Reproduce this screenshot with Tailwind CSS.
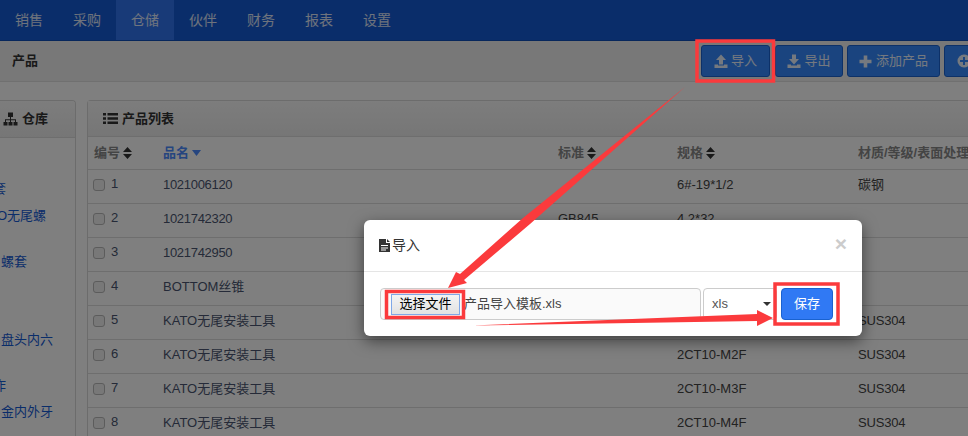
<!DOCTYPE html>
<html lang="zh-CN">
<head>
<meta charset="utf-8">
<title>产品导入</title>
<script src="https://cdn.jsdelivr.net/npm/@tailwindcss/browser@4"></script>
</head>
<body class="m-0 bg-white">
<div class="relative w-[968px] h-[436px] overflow-hidden bg-white text-[13px] text-[#444] font-['Liberation_Sans','Noto_Sans_CJK_SC',sans-serif]">
  <!-- Page -->
  <nav class="flex h-[41px] border-b border-[#0f4fb8] bg-[#145ad4] text-[14px] text-white/85">
    <a class="flex w-[58px] items-center justify-center">销售</a>
    <a class="flex w-[58px] items-center justify-center">采购</a>
    <a class="flex w-[58px] items-center justify-center bg-[#3074f0]">仓储</a>
    <a class="flex w-[58px] items-center justify-center">伙伴</a>
    <a class="flex w-[58px] items-center justify-center">财务</a>
    <a class="flex w-[58px] items-center justify-center">报表</a>
    <a class="flex w-[58px] items-center justify-center">设置</a>
  </nav>
  <div class="flex h-[41px] items-start border-b border-[#e0e0e0] bg-[#f1f1f1]">
    <div class="w-[701px] shrink-0 pl-[12px] pt-[10px] font-bold text-[#333]">产品</div>
    <div class="mt-[4px] flex shrink-0 gap-[4px] text-white/90">
      <button class="mr-[1px] flex h-[32px] w-[69px] items-center justify-center gap-[3px] rounded-[3px] border border-[#1a62d0] bg-[#3489ff]">
        <svg class="w-[14px] h-[14px]" viewBox="0 0 14 14" fill="currentColor"><path d="M7 0.5 12 6H9v4.5H5V6H2zM0.5 10.5H4v1h6v-1h3.5V14H0.5z"/></svg><span>导入</span></button>
      <button class="flex h-[32px] w-[68px] items-center justify-center gap-[3px] rounded-[3px] border border-[#1a62d0] bg-[#3489ff]">
        <svg class="w-[14px] h-[14px]" viewBox="0 0 14 14" fill="currentColor"><path d="M5 0.5h4V5h3L7 10.5 2 5h3zM0.5 10.5H4v1h6v-1h3.5V14H0.5z"/></svg><span>导出</span></button>
      <button class="flex h-[32px] w-[93px] items-center justify-center gap-[4px] rounded-[3px] border border-[#1a62d0] bg-[#3489ff]">
        <svg class="w-[13px] h-[13px]" viewBox="0 0 13 13" fill="currentColor"><path d="M4.7 0.5h3.6v4.2h4.2v3.6H8.3v4.2H4.7V8.3H0.5V4.7h4.2z"/></svg><span>添加产品</span></button>
      <button class="flex h-[32px] w-[90px] items-center gap-[4px] rounded-[3px] border border-[#1a62d0] bg-[#3489ff] pl-[12px]">
        <svg class="w-[14px] h-[14px]" viewBox="0 0 14 14"><circle cx="7" cy="7" r="6.5" fill="currentColor"/><path d="M6 3h2v3h3v2H8v3H6V8H3V6h3z" fill="#3489ff"/></svg><span>添加</span></button>
    </div>
  </div>
  <main class="flex items-start gap-[11px] pt-[18px]">
    <!-- Warehouse side panel -->
    <section class="h-[340px] w-[76px] shrink-0 overflow-hidden rounded-tr-[4px] border-r border-t border-[#d8d8d8] bg-white">
      <header class="flex h-[37px] items-center gap-[4px] border-b border-[#dcdcdc] bg-gradient-to-b from-[#fafafa] to-[#ededed] pl-[3px] font-bold text-[#333]">
        <svg class="w-[15px] h-[14px]" viewBox="0 0 15 14" fill="currentColor"><path d="M5 0.5h5v4.500H8v2.200h5V10h1.500v3.500h-4V10H12V8.200H8V10h1.500v3.500h-4V10H7V8.200H3V10h1.500v3.500h-4V10H2V7.200h5V5H5z"/></svg><span>仓库</span>
      </header>
      <ul class="relative whitespace-nowrap text-[#145ad4]">
        <li class="ml-[-7px] mt-[41px] h-[20px] leading-[20px]">套</li>
        <li class="ml-[-3px] mt-[7px] h-[20px] leading-[20px]">O无尾螺</li>
        <li class="ml-[1px] mt-[26px] h-[20px] leading-[20px]">螺套</li>
        <li class="ml-[1px] mt-[58px] h-[20px] leading-[20px]">盘头内六</li>
        <li class="ml-[-7px] mt-[26px] h-[20px] leading-[20px]">作</li>
        <li class="ml-[1px] mt-[6px] h-[20px] leading-[20px]">金内外牙</li>
      </ul>
    </section>
    <!-- Product list panel -->
    <section class="w-[1000px] shrink-0 rounded-tl-[4px] border-l border-t border-[#d8d8d8] bg-white">
      <header class="flex h-[36px] items-center gap-[4px] border-b border-[#dcdcdc] bg-gradient-to-b from-[#fafafa] to-[#ededed] pl-[15px] font-bold text-[#333]">
        <svg class="w-[15px] h-[13px]" viewBox="0 0 15 13" fill="currentColor"><path d="M0 1h3v2.500H0zM4.500 1H15v2.500H4.500zM0 5.200h3v2.500H0zM4.500 5.200H15v2.500H4.500zM0 9.500h3V12H0zM4.500 9.500H15V12H4.500z"/></svg><span>产品列表</span>
      </header>
      <table class="w-[1000px] table-fixed border-collapse">
        <colgroup><col class="w-[69px]"><col class="w-[395px]"><col class="w-[119px]"><col class="w-[181px]"><col></colgroup>
        <thead class="font-bold text-[#888]">
          <tr class="h-[32px] border-b border-[#dcdcdc] text-left">
            <th class="pl-[6px] font-bold"><span class="inline-flex items-center gap-[3px]">编号<svg class="w-[9px] h-[12px] text-[#333]" viewBox="0 0 9 12" fill="currentColor"><path d="M4.500 0 9 5H0zM0 7h9l-4.500 5z"/></svg></span></th>
            <th class="pl-[6px] font-bold text-[#4a8aff]"><span class="inline-flex items-center gap-[3px]">品名<svg class="w-[9px] h-[6px]" viewBox="0 0 9 6" fill="currentColor"><path d="M0 0h9L4.500 6z"/></svg></span></th>
            <th class="pl-[6px] font-bold"><span class="inline-flex items-center gap-[3px]">标准<svg class="w-[9px] h-[12px] text-[#333]" viewBox="0 0 9 12" fill="currentColor"><path d="M4.500 0 9 5H0zM0 7h9l-4.500 5z"/></svg></span></th>
            <th class="pl-[6px] font-bold"><span class="inline-flex items-center gap-[3px]">规格<svg class="w-[9px] h-[12px] text-[#333]" viewBox="0 0 9 12" fill="currentColor"><path d="M4.500 0 9 5H0zM0 7h9l-4.500 5z"/></svg></span></th>
            <th class="pl-[6px] font-bold">材质/等级/表面处理</th>
          </tr>
        </thead>
        <tbody class="text-[#444]">
          <tr class="h-[34px] border-b border-[#dcdcdc]"><td class="pl-[5px] pb-[3px]"><span class="inline-flex items-center gap-[6px] text-[#4a5570]"><i class="translate-y-[1px] h-[12px] w-[12px] rounded-[3px] border border-[#b8b8b8] bg-[#f0f0f0]"></i>1</span></td><td class="pl-[6px] pb-[3px] text-[#4a5570] tracking-[-0.3px]">1021006120</td><td class="pl-[6px] pb-[3px]"></td><td class="pl-[6px] pb-[3px]">6#-19*1/2</td><td class="pl-[6px] pb-[3px]">碳钢</td></tr>
          <tr class="h-[34px] border-b border-[#dcdcdc]"><td class="pl-[5px] pb-[3px]"><span class="inline-flex items-center gap-[6px] text-[#4a5570]"><i class="translate-y-[1px] h-[12px] w-[12px] rounded-[3px] border border-[#b8b8b8] bg-[#f0f0f0]"></i>2</span></td><td class="pl-[6px] pb-[3px] text-[#4a5570] tracking-[-0.3px]">1021742320</td><td class="pl-[6px] pb-[3px]">GB845</td><td class="pl-[6px] pb-[3px]">4.2*32</td><td class="pl-[6px] pb-[3px]"></td></tr>
          <tr class="h-[34px] border-b border-[#dcdcdc]"><td class="pl-[5px] pb-[3px]"><span class="inline-flex items-center gap-[6px] text-[#4a5570]"><i class="translate-y-[1px] h-[12px] w-[12px] rounded-[3px] border border-[#b8b8b8] bg-[#f0f0f0]"></i>3</span></td><td class="pl-[6px] pb-[3px] text-[#4a5570] tracking-[-0.3px]">1021742950</td><td class="pl-[6px] pb-[3px]"></td><td class="pl-[6px] pb-[3px]"></td><td class="pl-[6px] pb-[3px]"></td></tr>
          <tr class="h-[34px] border-b border-[#dcdcdc]"><td class="pl-[5px] pb-[3px]"><span class="inline-flex items-center gap-[6px] text-[#4a5570]"><i class="translate-y-[1px] h-[12px] w-[12px] rounded-[3px] border border-[#b8b8b8] bg-[#f0f0f0]"></i>4</span></td><td class="pl-[6px] pb-[3px] text-[#4a5570]">BOTTOM丝锥</td><td class="pl-[6px] pb-[3px]"></td><td class="pl-[6px] pb-[3px]"></td><td class="pl-[6px] pb-[3px]"></td></tr>
          <tr class="h-[34px] border-b border-[#dcdcdc]"><td class="pl-[5px] pb-[3px]"><span class="inline-flex items-center gap-[6px] text-[#4a5570]"><i class="translate-y-[1px] h-[12px] w-[12px] rounded-[3px] border border-[#b8b8b8] bg-[#f0f0f0]"></i>5</span></td><td class="pl-[6px] pb-[3px] text-[#4a5570]">KATO无尾安装工具</td><td class="pl-[6px] pb-[3px]"></td><td class="pl-[6px] pb-[3px]">2CT10-M1F</td><td class="pl-[6px] pb-[3px] tracking-[-0.2px]">SUS304</td></tr>
          <tr class="h-[34px] border-b border-[#dcdcdc]"><td class="pl-[5px] pb-[3px]"><span class="inline-flex items-center gap-[6px] text-[#4a5570]"><i class="translate-y-[1px] h-[12px] w-[12px] rounded-[3px] border border-[#b8b8b8] bg-[#f0f0f0]"></i>6</span></td><td class="pl-[6px] pb-[3px] text-[#4a5570]">KATO无尾安装工具</td><td class="pl-[6px] pb-[3px]"></td><td class="pl-[6px] pb-[3px]">2CT10-M2F</td><td class="pl-[6px] pb-[3px] tracking-[-0.2px]">SUS304</td></tr>
          <tr class="h-[34px] border-b border-[#dcdcdc]"><td class="pl-[5px] pb-[3px]"><span class="inline-flex items-center gap-[6px] text-[#4a5570]"><i class="translate-y-[1px] h-[12px] w-[12px] rounded-[3px] border border-[#b8b8b8] bg-[#f0f0f0]"></i>7</span></td><td class="pl-[6px] pb-[3px] text-[#4a5570]">KATO无尾安装工具</td><td class="pl-[6px] pb-[3px]"></td><td class="pl-[6px] pb-[3px]">2CT10-M3F</td><td class="pl-[6px] pb-[3px] tracking-[-0.2px]">SUS304</td></tr>
          <tr class="h-[34px] border-b border-[#dcdcdc]"><td class="pl-[5px] pb-[3px]"><span class="inline-flex items-center gap-[6px] text-[#4a5570]"><i class="translate-y-[1px] h-[12px] w-[12px] rounded-[3px] border border-[#b8b8b8] bg-[#f0f0f0]"></i>8</span></td><td class="pl-[6px] pb-[3px] text-[#4a5570]">KATO无尾安装工具</td><td class="pl-[6px] pb-[3px]"></td><td class="pl-[6px] pb-[3px]">2CT10-M4F</td><td class="pl-[6px] pb-[3px] tracking-[-0.2px]">SUS304</td></tr>
        </tbody>
      </table>
    </section>
  </main>

  <!-- Backdrop -->
  <div class="absolute inset-0 bg-black/50"></div>

  <!-- Modal -->
  <div class="absolute left-[364px] top-[220px] h-[116px] w-[498px] rounded-[6px] bg-white shadow-[0_5px_15px_rgba(0,0,0,0.5)]">
    <div class="flex h-[52px] items-center border-b border-[#e5e5e5] pl-[15px] pr-[15px] text-[14px] text-[#333]">
      <svg class="mr-[2px] w-[11px] h-[13px]" viewBox="0 0 11 13" fill="currentColor"><path fill-rule="evenodd" d="M0 0h7v4h4v9H0zM8 0l3 3H8zM2 6v1h7V6zM2 8.500v1h7v-1zM2 10.500v1h5v-1z"/></svg>
      <span>导入</span>
      <span class="ml-auto mt-[-4px] text-[21px] font-bold leading-none text-[#ccc]">×</span>
    </div>
    <div class="flex items-start pl-[16px] pt-[16px]">
      <div class="flex h-[32px] w-[321px] items-center rounded-[4px] border border-[#ccc] bg-[#fafafa] pl-[10px] text-[#444]">
        <span class="flex h-[21px] w-[69px] items-center justify-center border border-[#7fa8e8] bg-gradient-to-b from-[#f4f4f4] to-[#e2e2e2] text-black">选择文件</span>
        <span class="ml-[4px]">产品导入模板.xls</span>
      </div>
      <div class="relative ml-[2px] flex h-[32px] w-[74px] items-center rounded-[4px] border border-[#ccc] bg-white pl-[8px] text-[#555]">xls<svg class="absolute right-[5px] top-[13px] w-[8px] h-[4px]" viewBox="0 0 8 4" fill="#333"><path d="M0 0h8L4 4z"/></svg></div>
      <button class="ml-[4px] flex h-[32px] w-[52px] items-center justify-center rounded-[4px] border border-[#1a62d0] bg-[#3079f4] text-white">保存</button>
    </div>
  </div>

  <!-- Screenshot annotations -->
  <svg class="absolute inset-0 w-[968px] h-[436px]" viewBox="0 0 968 436">
    <g fill="none" stroke="#fb3a3c" stroke-width="3.500">
      <rect x="697" y="41" width="76.500" height="40"/>
      <rect x="386.500" y="291.500" width="77" height="26"/>
      <rect x="775" y="284" width="63" height="40"/>
    </g>
    <path fill="#fb3a3c" d="M685 87 530 224 464 280 467 283 448 288 456 272 460 274 523 218z"/>
    <path fill="#fb3a3c" d="M472 325.500 757 314 757 310 773 318 757 326 757 321z"/>
  </svg>
</div>
</body>
</html>
